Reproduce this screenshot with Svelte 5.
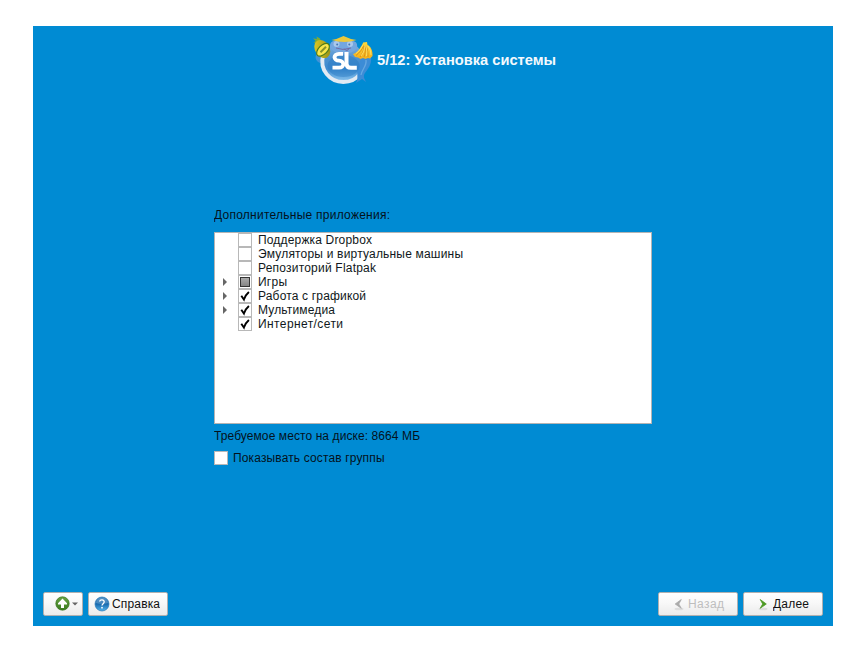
<script>
  const groups = [
    { label: 'Поддержка Dropbox', state: 'off', expandable: false, width: 114 },
    { label: 'Эмуляторы и виртуальные машины', state: 'off', expandable: false, width: 205 },
    { label: 'Репозиторий Flatpak', state: 'off', expandable: false, width: 118 },
    { label: 'Игры', state: 'partial', expandable: true, width: 29 },
    { label: 'Работа с графикой', state: 'on', expandable: true, width: 108 },
    { label: 'Мультимедиа', state: 'on', expandable: true, width: 77 },
    { label: 'Интернет/сети', state: 'on', expandable: false, width: 85 }
  ];
</script>

<main class="installer">
  <header>
    <svg class="logo" width="62" height="52" viewBox="0 0 62 52" aria-hidden="true">
      <defs>
        <linearGradient id="globe" x1="0" y1="0" x2="0" y2="1">
          <stop offset="0" stop-color="#8bb6df" /><stop offset=".45" stop-color="#4a90d0" /><stop offset=".7" stop-color="#3d8bd0" /><stop offset="1" stop-color="#86c0ec" />
        </linearGradient>
        <linearGradient id="fruit" x1="0" y1="0" x2="1" y2="1">
          <stop offset="0" stop-color="#e6d028" /><stop offset="1" stop-color="#8f8a12" />
        </linearGradient>
        <linearGradient id="banana" x1="0" y1="0" x2="0" y2="1">
          <stop offset="0" stop-color="#ffd93c" /><stop offset="1" stop-color="#f3ae1c" />
        </linearGradient>
      </defs>
      <path d="M4 20c-2 5 3 9 9 9l5-6-7-4z" fill="#4393d6" />
      <circle cx="31.3" cy="26" r="20" fill="url(#globe)" />
      <path d="M11.2 20C7 35 18 47 31.3 47c7 0 13-3 16.5-8" fill="none" stroke="#e1eaf3" stroke-width="3.900" />
      <path d="M50 20l9 2c1 7-3 12-6 16-2 3-1 5 1 9l-4-3-6 4c3-6 0-9 2-15z" fill="#3c8cd6" />
      <path d="M54 25c1 6-4 9-5 15" fill="none" stroke="#66a8e2" stroke-width="1.3" />
      <path d="M18 11c0-5 4-6 8-5h11c5-1 9 1 8 6-2 5-7 6.5-13.5 6.5S19 16 18 11z" fill="#73a6df" />
      <circle cx="24.5" cy="9" r="3" fill="#a9c8ec" /><circle cx="38" cy="9" r="3" fill="#a9c8ec" />
      <circle cx="25.2" cy="9.5" r="1" fill="#4477b3" /><circle cx="37.3" cy="9.5" r="1" fill="#4477b3" />
      <path d="M24 13q7 3 15 0M32 13.500q3 4 5 0" fill="none" stroke="#7065a0" stroke-width=".9" />
      <path d="M19.500 5q6-1 12-4 6 3 13 4-12 4-25 0z" fill="#eac83c" />
      <ellipse cx="31.5" cy="31" rx="16" ry="11" fill="#2376c0" opacity=".4" />
      <path d="M31 18.800h-4c-6 0-6 6.900 0 6.900 5.800 0 5.800 7 0 7h-6.500" fill="none" stroke="#fff" stroke-width="3.800" />
      <path d="M34.500 16.900v11.500q0 4.300 4.300 4.300h6" fill="none" stroke="#fff" stroke-width="4" />
      <path d="M7 7L1.500 8l2-2.300L1 3.300l4 .700-.5-2.500L8 3.500l1 3z" fill="#7dab35" />
      <ellipse cx="10.300" cy="14" rx="7.200" ry="9.700" transform="rotate(-32 10.3 14)" fill="url(#fruit)" />
      <ellipse cx="11" cy="14.800" rx="4.400" ry="7.900" transform="rotate(45 11 14.800)" fill="#f7e64b" stroke="#4f7a1c" stroke-width="1.200" />
      <path d="M14 11.800L8.500 17.300" stroke="#86922a" stroke-width="2" />
      <path d="M51 7.500l4-.5.5 3c3 1 5.500 6 5 11l-2.500 2.500-2-.5-2.500 1-2.500-1-2.500 1-2.500-1.500-3-.5-2-3c4-1 7-5 10-11z" fill="url(#banana)" />
      <path d="M51.500 10.500c-1 4-4 7-7.500 10m8-9.500c0 5-2 8-4 11m5-11c1 4 0 8-1 11m2-11c2 4 2 8 2 11" fill="none" stroke="#d88d12" stroke-width=".9" />
      <path d="M51 10q-3 6-7 8.500M53 11q-1 7-4 10M54 11q1.500 6 .5 10M56 11q3 4 3 9" fill="none" stroke="#ffe56e" stroke-width=".8" />
    </svg>
    <h1><svg width="180" height="20"><text x="0" y="15" textLength="179">5/12: Установка системы</text></svg></h1>
  </header>

  <section class="content">
    <svg class="label" width="200" height="16"><text x="0" y="12" textLength="176">Дополнительные приложения:</text></svg>
    <div class="tree">
      {#each groups as item}
        <div class="row">
          <span class="arrow">
            {#if item.expandable}<svg width="6" height="8"><path d="M1 0v8L5 4z" fill="#666" /></svg>{/if}
          </span>
          <span class="check">
            {#if item.state === 'on'}
              <svg width="12" height="12" viewBox="0 0 12 12"><path d="M2.300 5.700l2.600 3.800Q6 5.500 9.900 2" fill="none" stroke="#000" stroke-width="1.900" /></svg>
            {:else if item.state === 'partial'}<i></i>{/if}
          </span>
          <svg class="name" width="240" height="14"><text x="0" y="11" textLength={item.width}>{item.label}</text></svg>
        </div>
      {/each}
    </div>
    <svg class="space" width="220" height="16"><text x="0" y="12" textLength="206">Требуемое место на диске: 8664 МБ</text></svg>
    <div class="option"><span class="check"></span><svg width="170" height="16"><text x="0" y="12" textLength="151.5">Показывать состав группы</text></svg></div>
  </section>

  <footer>
    <button class="menu" aria-label="Меню">
      <svg width="28" height="16" viewBox="0 0 28 16">
        <defs><linearGradient id="green" x1="0" y1="0" x2="0" y2="1"><stop stop-color="#69a344" /><stop offset="1" stop-color="#397b1c" /></linearGradient></defs>
        <circle cx="7.5" cy="7.5" r="6.7" fill="url(#green)" stroke="#39751f" stroke-width=".7" />
        <path d="M7.500 2.500L3 7.200v1.300h3V12h3V8.500h3V7.200z" fill="#fff" />
        <path d="M17 6.500h6L20 9.500z" fill="#666" />
      </svg>
    </button>
    <button class="help">
      <svg width="16" height="16" viewBox="0 0 16 16">
        <defs><linearGradient id="blue" x1="0" y1="0" x2="0" y2="1"><stop stop-color="#2e79b8" /><stop offset=".5" stop-color="#1769ae" /><stop offset="1" stop-color="#54b5ed" /></linearGradient></defs>
        <circle cx="8" cy="8" r="7" fill="url(#blue)" stroke="#2878b6" stroke-width=".7" />
        <path d="M2 7a6 5.5 0 0 1 12 0Q8 9 2 7z" fill="#fff" opacity=".2" />
        <path d="M5.6 5.5C6 3.2 10.4 3.2 10.2 6c-.2 1.6-2.2 1.8-2.2 3.5" fill="none" stroke="#fff" stroke-width="1.3" /><circle cx="8" cy="11.7" r=".9" fill="#fff" />
      </svg>
      <svg class="caption" width="48" height="16"><text x="0" y="12" textLength="48">Справка</text></svg>
    </button>
    <span class="spacer"></span>
    <button class="nav" disabled>
      <svg width="14" height="16"><ellipse cx="8" cy="13" rx="4.5" ry="1.3" fill="#ddd" /><path d="M10.3 3.5L4.2 8l6.1 4.300L7.800 8z" fill="#aaa" stroke="#aaa" stroke-width=".8" /></svg>
      <svg class="caption" width="37" height="16"><text x="0" y="12" textLength="36">Назад</text></svg>
    </button>
    <button class="nav">
      <svg width="14" height="16"><ellipse cx="7" cy="13" rx="4.5" ry="1.3" fill="#ddd" /><path d="M4.2 3.5L10.3 8l-6.100 4.300L6.700 8z" fill="#4e9a24" stroke="#4e9a24" stroke-width=".8" /></svg>
      <svg class="caption" width="37" height="16"><text x="0" y="12" textLength="36">Далее</text></svg>
    </button>
  </footer>
</main>

<style>
  :global(body) { background: #fff; }
  .installer {
    box-sizing: border-box;
    width: 800px;
    height: 600px;
    margin: 26px 25px 21px 33px;
    display: flex;
    flex-direction: column;
    background: #008bd3;
    font: 12px/14px "Liberation Sans", Arial, sans-serif;
    color: #101820;
  }
  svg { display: block; flex: none; }
  text { fill: currentColor; }
  header { display: flex; height: 181px; padding: 9px 0 0 279px; box-sizing: border-box; }
  h1 { margin: 15px 0 0 3px; font-size: 14.67px; line-height: 20px; font-weight: bold; color: #f4f9fd; }
  .content { width: 438px; margin-left: 181px; flex: 1; }
  .label { color: #04121c; }
  .tree { box-sizing: border-box; height: 192px; margin-top: 9px; border: 1px solid #b4b4b4; background: #fff; }
  .row { height: 14px; display: flex; align-items: center; }
  .arrow { width: 16px; padding-left: 7px; }
  .check { box-sizing: border-box; width: 14px; height: 14px; border: 1px solid #b8b8b8; background: #fff; flex: none; }
  .check i { display: block; box-sizing: border-box; width: 10px; height: 10px; margin: 1px; border: 1px solid #333; background: linear-gradient(#aaa, #858585); }
  .name { margin-left: 6px; }
  .space { margin-top: 4px; color: #04121c; }
  .option { display: flex; align-items: center; gap: 5px; margin-top: 6px; color: #04121c; }
  footer { box-sizing: border-box; display: flex; height: 34px; padding: 0 10px 10px; gap: 5px; }
  button {
    box-sizing: border-box;
    height: 24px;
    margin: 0;
    padding: 0;
    display: flex;
    align-items: center;
    font: inherit;
    color: #101010;
    border: 1px solid #b0b0b0;
    border-radius: 2px;
    background: linear-gradient(#fff, #f8f8f8 45%, #ebebeb);
  }
  .menu { width: 40px; padding-left: 11px; }
  .help { width: 80px; padding-left: 5px; }
  .help .caption { margin-left: 2px; }
  .spacer { flex: 1; }
  .nav { width: 80px; padding-left: 12px; }
  .nav .caption { margin-left: 3px; }
  .nav:disabled { color: #bebebe; }
</style>
